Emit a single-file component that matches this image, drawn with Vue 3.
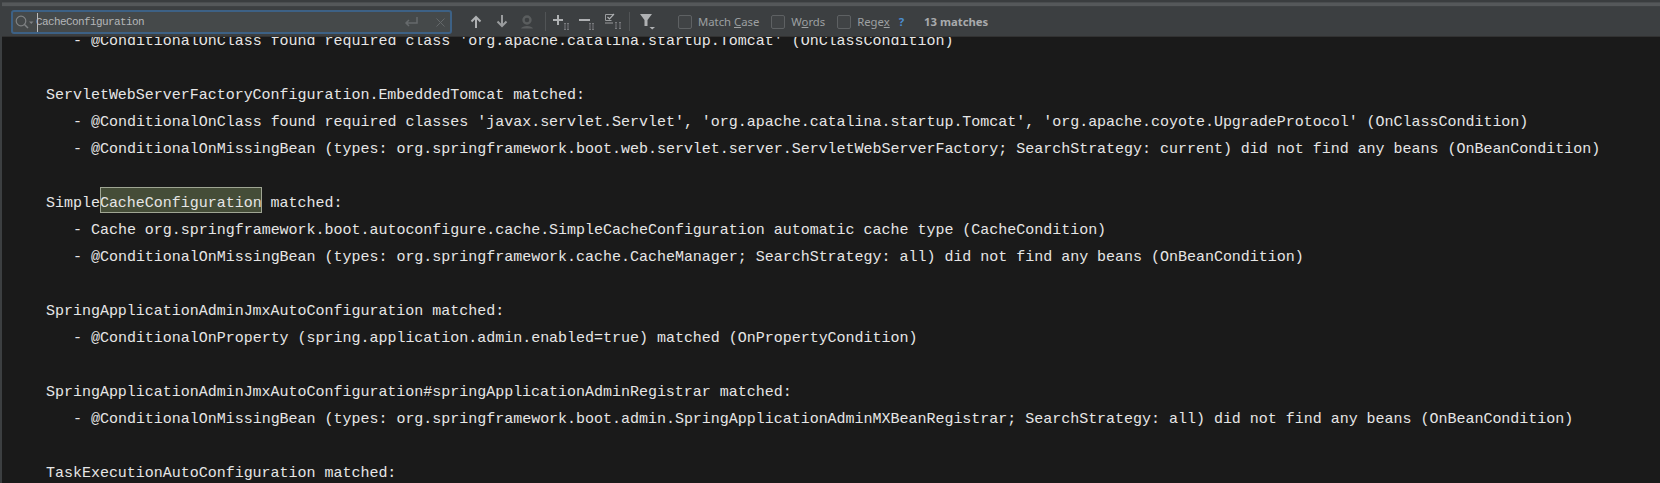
<script setup>
const lines = [
  { i: 1, t: "- @ConditionalOnClass found required class 'org.apache.catalina.startup.Tomcat' (OnClassCondition)" },
  { i: 0, t: '' },
  { i: 0, t: 'ServletWebServerFactoryConfiguration.EmbeddedTomcat matched:' },
  { i: 1, t: "- @ConditionalOnClass found required classes 'javax.servlet.Servlet', 'org.apache.catalina.startup.Tomcat', 'org.apache.coyote.UpgradeProtocol' (OnClassCondition)" },
  { i: 1, t: '- @ConditionalOnMissingBean (types: org.springframework.boot.web.servlet.server.ServletWebServerFactory; SearchStrategy: current) did not find any beans (OnBeanCondition)' },
  { i: 0, t: '' },
  { i: 0, t: 'Simple', m: 'CacheConfiguration', a: ' matched:' },
  { i: 1, t: '- Cache org.springframework.boot.autoconfigure.cache.SimpleCacheConfiguration automatic cache type (CacheCondition)' },
  { i: 1, t: '- @ConditionalOnMissingBean (types: org.springframework.cache.CacheManager; SearchStrategy: all) did not find any beans (OnBeanCondition)' },
  { i: 0, t: '' },
  { i: 0, t: 'SpringApplicationAdminJmxAutoConfiguration matched:' },
  { i: 1, t: '- @ConditionalOnProperty (spring.application.admin.enabled=true) matched (OnPropertyCondition)' },
  { i: 0, t: '' },
  { i: 0, t: 'SpringApplicationAdminJmxAutoConfiguration#springApplicationAdminRegistrar matched:' },
  { i: 1, t: '- @ConditionalOnMissingBean (types: org.springframework.boot.admin.SpringApplicationAdminMXBeanRegistrar; SearchStrategy: all) did not find any beans (OnBeanCondition)' },
  { i: 0, t: '' },
  { i: 0, t: 'TaskExecutionAutoConfiguration matched:' }
]
</script>

<template>
  <div class="app">
    <div class="strip"></div>
    <div class="bar">
      <div class="search">
        <svg class="mag" width="20" height="14" viewBox="0 0 20 14"><circle cx="6" cy="6" r="4.800" fill="none" stroke="#7f8284" stroke-width="1.200"/><path d="M9.500 9.500 13 13" stroke="#7f8284" stroke-width="1.500"/><path d="M14 6.500h4.500L16.250 9z" fill="#7f8284"/></svg>
        <span class="caret"></span>
        <span class="query">CacheConfiguration</span>
        <svg class="enter" width="14" height="10" viewBox="0 0 14 10"><path d="M13 0v6H2M5 3 2 6l3 3" fill="none" stroke="#666a6c" stroke-width="1.500"/></svg>
        <svg class="close" width="9" height="9" viewBox="0 0 9 9"><path d="M.5.5l8 8M8.500.5l-8 8" stroke="#64686a" stroke-width="1"/></svg>
      </div>
      <div class="tools">
        <svg class="t-up" width="12" height="13" viewBox="0 0 12 13"><path d="M6 13V2M1.500 6.500 6 2l4.500 4.500" fill="none" stroke="#afb1b3" stroke-width="2"/></svg>
        <svg class="t-down" width="12" height="13" viewBox="0 0 12 13"><path d="M6 0v11M1.500 6.500 6 11l4.500-4.500" fill="none" stroke="#9a9c9e" stroke-width="2"/></svg>
        <svg class="t-user" width="12" height="14" viewBox="0 0 12 14"><circle cx="6" cy="5" r="3.500" fill="none" stroke="#5a5d5e" stroke-width="2.400"/><path d="M0 13.500c1-3.500 11-3.500 12 0z" fill="#5a5d5e"/></svg>
        <span class="sep s1"></span>
        <svg width="17" height="16" viewBox="0 0 17 16"><path d="M5 1v10M0 6h10" stroke="#afb1b3" stroke-width="2"/><path d="M11 9.500h2M11 15.500h2M12 9.500v6M14 9.500h2M14 15.500h2M15 9.500v6" stroke="#85878a" stroke-width=".8" fill="none"/></svg>
        <svg class="g2" width="17" height="16" viewBox="0 0 17 16"><path d="M0 6h11" stroke="#afb1b3" stroke-width="2"/><path d="M10 9.500h2M10 15.500h2M11 9.500v6M13 9.500h2M13 15.500h2M14 9.500v6" stroke="#85878a" stroke-width=".8" fill="none"/></svg>
        <svg class="g2" width="18" height="17" viewBox="0 0 18 17"><path d="M.500 1.500h8M.500 1.500v6h6" fill="none" stroke="#9a9c9e"/><path d="M2.500 4 4.500 6 9 1" fill="none" stroke="#afb1b3" stroke-width="1.200"/><path d="M0 10h8" stroke="#9a9c9e"/><path d="M10 9.500h2M10 15.500h2M11 9.500v6M14 9.500h2M14 15.500h2M15 9.500v6" stroke="#85878a" stroke-width=".8" fill="none"/></svg>
        <span class="sep s2"></span>
        <svg width="16" height="17" viewBox="0 0 16 17"><path d="M0 1h12L7.500 7v6h-3V7z" fill="#afb1b3"/><path d="M9.500 14H15l-2.750 2.500z" fill="#afb1b3"/></svg>
      </div>
      <label class="opt o1"><span class="box"></span><span>Match <u>C</u>ase</span></label>
      <label class="opt o2"><span class="box"></span><span>W<u>o</u>rds</span></label>
      <label class="opt o3"><span class="box"></span><span>Rege<u>x</u></span></label>
      <span class="help">?</span>
      <span class="count">13 matches</span>
    </div>
    <div class="editor">
      <div class="content">
        <div v-for="(l, n) in lines" :key="n" class="line" :class="{ indent: l.i }">{{ l.t }}<span v-if="l.m" class="match">{{ l.m }}</span>{{ l.a }}</div>
      </div>
    </div>
  </div>
</template>

<style>
html, body { margin: 0; background: #1a1a1a; }
</style>

<style scoped>
.app { width: 1660px; height: 483px; display: flex; flex-direction: column; overflow: hidden; background: #1a1a1a; border-left: 2px solid #3c3f41; box-sizing: border-box; }
.strip { height: 7px; flex: none; background: linear-gradient(#3a3d3f 0 2px, #4a4d4f 2px 3px, #55585a 3px 6px, #3f4244 6px); }
.bar { height: 30px; flex: none; display: flex; align-items: center; background: #3c3f41; border-bottom: 1px solid #323232; box-sizing: border-box; font-family: "Noto Sans", "Open Sans", sans-serif; font-size: 11.3px; color: #9da0a2; }
.search { width: 441px; height: 24px; margin-left: 9px; margin-top: 1px; flex: none; display: flex; align-items: center; background: #45494a; border: 2px solid #3d6185; border-radius: 3px; box-sizing: border-box; }
.mag { margin-left: 2px; flex: none; }
.caret { width: 1px; height: 19px; background: #bbb; margin-left: 2px; flex: none; }
.query { font-family: "Liberation Mono", monospace; font-size: 11px; letter-spacing: -0.6px; color: #b4b6b8; margin-left: -2px; flex: 1; }
.enter { margin-right: 18px; flex: none; }
.close { margin-right: 5px; flex: none; }
.tools { display: flex; align-items: center; margin-left: 18px; flex: none; }
.t-down { margin-left: 14px; }
.t-user { margin-left: 13px; }
.g2 { margin-left: 9px; }
.sep { width: 1px; height: 19px; background: #515456; }
.s1 { margin: 0 7px 0 12px; }
.s2 { margin: 0 10px 0 6px; }
.opt { display: flex; align-items: center; gap: 6px; }
.o1 { margin-left: 22px; }
.o2, .o3 { margin-left: 12px; }
.box { width: 14px; height: 14px; box-sizing: border-box; border: 1px solid #5e6163; border-radius: 2px; background: #404345; }
.help { color: #4b8ed1; margin-left: 9px; font-weight: 700; }
.count { margin-left: 20px; font-weight: 700; color: #a9abad; }
.editor { flex: 1; min-height: 0; overflow: hidden; background: #1a1a1a; }
.content { margin-top: -9px; padding-left: 44px; font-family: "Liberation Mono", monospace; font-size: 15px; letter-spacing: -0.018px; line-height: 27px; color: #e6e6e6; }
.line { height: 27px; white-space: pre; }
.indent { padding-left: 27px; }
.match { display: inline-block; height: 26px; line-height: 33px; background: #454d38; outline: 1px solid #a0a694; outline-offset: -1px; vertical-align: top; margin-top: -3px; }
</style>
